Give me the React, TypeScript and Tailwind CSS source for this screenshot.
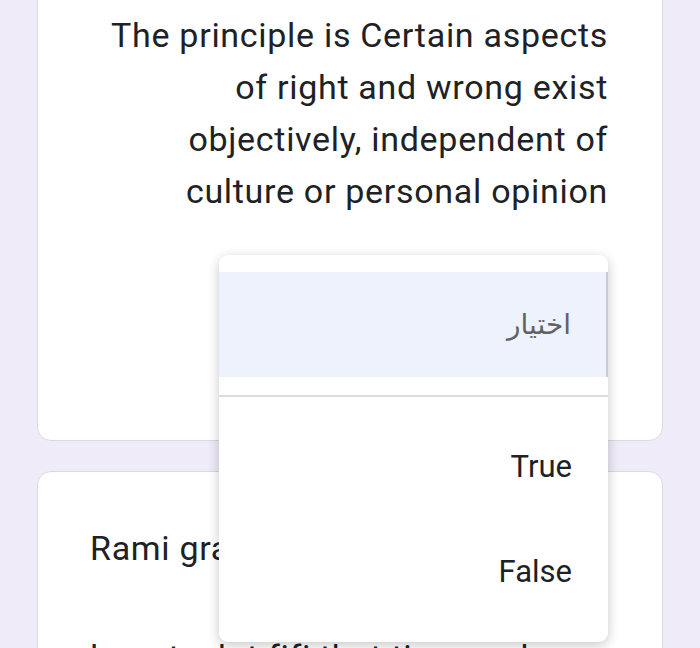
import React from "react";

export default function App() {
  return (
    <div className="relative h-[648px] w-[700px] overflow-hidden bg-[#efebf8] font-['Roboto',sans-serif] text-[#202124]">
      <div className="flex flex-col gap-[30px] px-[37px]">
        {/* question card */}
        <div className="-mt-[20px] h-[461px] rounded-[14px] border border-[#dcd8e4] bg-white pl-[30px] pr-[54px] pt-[28px]">
          <p className="text-right text-[34px] leading-[52px] tracking-[0.7px]">
            The principle is Certain aspects
            <br />
            of right and wrong exist
            <br />
            objectively, independent of
            <br />
            culture or personal opinion
          </p>
        </div>

        {/* next card */}
        <div className="h-[200px] rounded-[14px] border border-[#dcd8e4] bg-white px-[52px] pt-[50px]">
          <p className="text-[34px] leading-[52px] tracking-[0.7px]">Rami graded the students</p>
          <p className="mt-[57px] text-[34px] leading-[52px] tracking-[0.7px]">learnt a lot fifi that time and</p>
        </div>
      </div>

      {/* dropdown menu */}
      <div className="absolute left-[219px] top-[255px] flex h-[387px] w-[389px] flex-col rounded-[9px] bg-white shadow-[0_3px_12px_rgba(0,0,0,0.22)]">
        <div className="h-[17px]" />
        <div className="flex h-[105px] items-center justify-end border-r-2 border-[#c9cbd1] bg-[#edf2fc] pr-[35px]">
          <span dir="rtl" className="font-['DejaVu_Sans',sans-serif] text-[28px] text-[#5f6368]">
            اختيار
          </span>
        </div>
        <div className="h-[18px]" />
        <div className="h-[2px] bg-[#dadce0]" />
        <div className="flex h-[140px] items-center justify-end pr-[36px]">
          <span className="text-[31px]">True</span>
        </div>
        <div className="flex h-[70px] items-center justify-end pr-[36px]">
          <span className="text-[31px]">False</span>
        </div>
      </div>
    </div>
  );
}
